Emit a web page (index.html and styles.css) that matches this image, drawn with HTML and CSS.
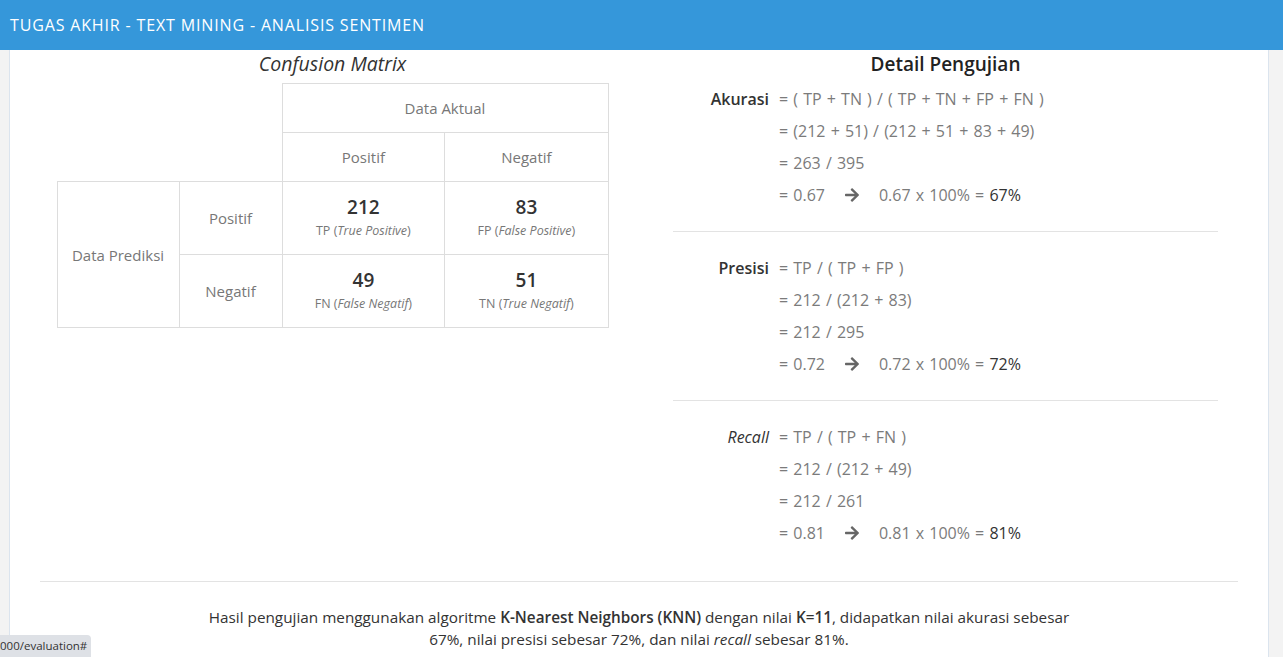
FILE: index.html
```html
<!DOCTYPE html>
<html lang="id">
<head>
<meta charset="utf-8">
<title>Evaluasi</title>
<link rel="stylesheet" href="styles.css">
</head>
<body>
<header class="topbar">TUGAS AKHIR - TEXT MINING - ANALISIS SENTIMEN</header>
<div class="page">
  <div class="gutter gutter-left"></div>
  <main class="main">
    <div class="cols">
      <section class="col">
        <h2 class="title-matrix">Confusion Matrix</h2>
        <table class="matrix">
          <tr class="r-head">
            <td class="blank" colspan="2" rowspan="2"></td>
            <td colspan="2">Data Aktual</td>
          </tr>
          <tr class="r-head">
            <td>Positif</td>
            <td>Negatif</td>
          </tr>
          <tr class="r-val">
            <td class="c-pred" rowspan="2">Data Prediksi</td>
            <td class="c-lab">Positif</td>
            <td class="c-num"><div class="num">212</div><div class="sub">TP (<i>True Positive</i>)</div></td>
            <td class="c-num"><div class="num">83</div><div class="sub">FP (<i>False Positive</i>)</div></td>
          </tr>
          <tr class="r-val">
            <td class="c-lab">Negatif</td>
            <td class="c-num"><div class="num">49</div><div class="sub">FN (<i>False Negatif</i>)</div></td>
            <td class="c-num"><div class="num">51</div><div class="sub">TN (<i>True Negatif</i>)</div></td>
          </tr>
        </table>
      </section>
      <section class="col">
        <h2 class="title-detail">Detail Pengujian</h2>
        <div class="metric">
          <div class="line"><span class="lab strong">Akurasi</span><span class="f">= ( TP + TN ) / ( TP + TN + FP + FN )</span></div>
          <div class="line"><span class="lab"></span><span class="f">= (212 + 51) / (212 + 51 + 83 + 49)</span></div>
          <div class="line"><span class="lab"></span><span class="f">= 263 / 395</span></div>
          <div class="line"><span class="lab"></span><span class="f">= 0.67<svg class="arrow" viewBox="0 0 448 512"><path d="M190.5 66.9l22.2-22.2c9.4-9.4 24.6-9.4 33.9 0L441 239c9.4 9.4 9.4 24.6 0 33.9L246.6 467.3c-9.4 9.4-24.6 9.4-33.9 0l-22.2-22.2c-9.5-9.5-9.3-25 .4-34.3L311.4 296H24c-13.3 0-24-10.7-24-24v-32c0-13.3 10.7-24 24-24h287.4L190.9 101.2c-9.8-9.3-10-24.8-.4-34.3z"/></svg>0.67 x 100% = <span class="res">67%</span></span></div>
        </div>
        <hr class="sep">
        <div class="metric">
          <div class="line"><span class="lab strong">Presisi</span><span class="f">= TP / ( TP + FP )</span></div>
          <div class="line"><span class="lab"></span><span class="f">= 212 / (212 + 83)</span></div>
          <div class="line"><span class="lab"></span><span class="f">= 212 / 295</span></div>
          <div class="line"><span class="lab"></span><span class="f">= 0.72<svg class="arrow" viewBox="0 0 448 512"><path d="M190.5 66.9l22.2-22.2c9.4-9.4 24.6-9.4 33.9 0L441 239c9.4 9.4 9.4 24.6 0 33.9L246.6 467.3c-9.4 9.4-24.6 9.4-33.9 0l-22.2-22.2c-9.5-9.5-9.3-25 .4-34.3L311.4 296H24c-13.3 0-24-10.7-24-24v-32c0-13.3 10.7-24 24-24h287.4L190.9 101.2c-9.8-9.3-10-24.8-.4-34.3z"/></svg>0.72 x 100% = <span class="res">72%</span></span></div>
        </div>
        <hr class="sep">
        <div class="metric">
          <div class="line"><span class="lab em">Recall</span><span class="f">= TP / ( TP + FN )</span></div>
          <div class="line"><span class="lab"></span><span class="f">= 212 / (212 + 49)</span></div>
          <div class="line"><span class="lab"></span><span class="f">= 212 / 261</span></div>
          <div class="line"><span class="lab"></span><span class="f">= 0.81<svg class="arrow" viewBox="0 0 448 512"><path d="M190.5 66.9l22.2-22.2c9.4-9.4 24.6-9.4 33.9 0L441 239c9.4 9.4 9.4 24.6 0 33.9L246.6 467.3c-9.4 9.4-24.6 9.4-33.9 0l-22.2-22.2c-9.5-9.5-9.3-25 .4-34.3L311.4 296H24c-13.3 0-24-10.7-24-24v-32c0-13.3 10.7-24 24-24h287.4L190.9 101.2c-9.8-9.3-10-24.8-.4-34.3z"/></svg>0.81 x 100% = <span class="res">81%</span></span></div>
        </div>
      </section>
    </div>
    <hr class="bottom-sep">
    <p class="summary">Hasil pengujian menggunakan algoritme <b>K-Nearest Neighbors (KNN)</b> dengan nilai <b>K=11</b>, didapatkan nilai akurasi sebesar<br>67%, nilai presisi sebesar 72%, dan nilai <i>recall</i> sebesar 81%.</p>
  </main>
  <div class="gutter gutter-right"></div>
</div>
<div class="status">000/evaluation#</div>
</body>
</html>
```
FILE: styles.css
```css
html, body {
  margin: 0;
  padding: 0;
  height: 100%;
  overflow: hidden;
}
body {
  font-family: "Open Sans", "Noto Sans", sans-serif;
  font-size: 14px;
  color: #333;
  background: #fff;
}
.topbar {
  height: 50px;
  background: #3597da;
  color: #fff;
  font-size: 16px;
  line-height: 50px;
  padding-left: 10px;
  letter-spacing: 0.85px;
}
.page {
  display: flex;
  height: 607px;
}
.gutter {
  background: #f3f3f3;
}
.gutter-left {
  width: 10px;
  border-right: 1px solid #dbe4ee;
  box-sizing: border-box;
}
.gutter-right {
  width: 15px;
  border-left: 1px solid #dbe4ee;
  box-sizing: border-box;
}
.main {
  flex: 1;
  padding: 0 30px;
}
.cols {
  display: grid;
  grid-template-columns: 1fr 1fr;
  gap: 28px;
}
.col {
  display: flex;
  flex-direction: column;
}
.title-matrix {
  margin: 0 0 5px;
  font-size: 19.5px;
  font-weight: 400;
  font-style: italic;
  line-height: 28px;
  text-align: center;
  color: #333;
}
.matrix {
  border-collapse: collapse;
  width: 552px;
  margin: 0 auto;
  color: #777;
  font-size: 15px;
  text-align: center;
}
.matrix td {
  border: 1px solid #ddd;
  padding: 0;
  vertical-align: middle;
}
.matrix td.blank {
  border-top: none;
  border-left: none;
}
.r-head td { height: 48px; }
.r-val td { height: 72px; }
.matrix td.c-num { height: 70px; padding-top: 2px; }
.c-pred { width: 121px; }
.c-lab { width: 102px; }
.num {
  font-size: 19px;
  font-weight: 600;
  color: #333;
  line-height: 24px;
}
.sub {
  font-size: 12.5px;
  line-height: 24px;
  color: #777;
}
.title-detail {
  margin: 0 0 5px;
  font-size: 19px;
  font-weight: 600;
  line-height: 28px;
  text-align: center;
  color: #222;
}
.metric {
  display: flex;
  flex-direction: column;
}
.line {
  display: flex;
  height: 32px;
  align-items: center;
  font-size: 16px;
  word-spacing: 1px;
  color: #7b7b7b;
}
.lab {
  width: 126px;
  text-align: right;
  color: #333;
  padding-right: 10px;
  box-sizing: border-box;
  flex: none;
}
.lab.strong { font-weight: 600; }
.lab.em { font-style: italic; }
.f {
  display: flex;
  align-items: center;
  white-space: pre;
}
.arrow {
  width: 14px;
  height: 16px;
  fill: #666;
  margin: 0 20px;
}
.res { color: #333; }
.sep {
  border: 0;
  border-top: 1px solid #e3e3e3;
  margin: 20px 20px 20px 20px;
}
.bottom-sep {
  border: 0;
  border-top: 1px solid #e3e3e3;
  margin: 32px 0 0;
}
.summary {
  margin: 24px 0 0;
  text-align: center;
  font-size: 15.3px;
  line-height: 22px;
  color: #333;
}
.summary b { font-weight: 600; }
.status {
  position: fixed;
  left: 0;
  bottom: 0;
  height: 22px;
  padding: 0 4px 0 0;
  background: #dee1e6;
  border-top-right-radius: 4px;
  font-size: 11.5px;
  line-height: 22px;
  color: #333;
}
```
